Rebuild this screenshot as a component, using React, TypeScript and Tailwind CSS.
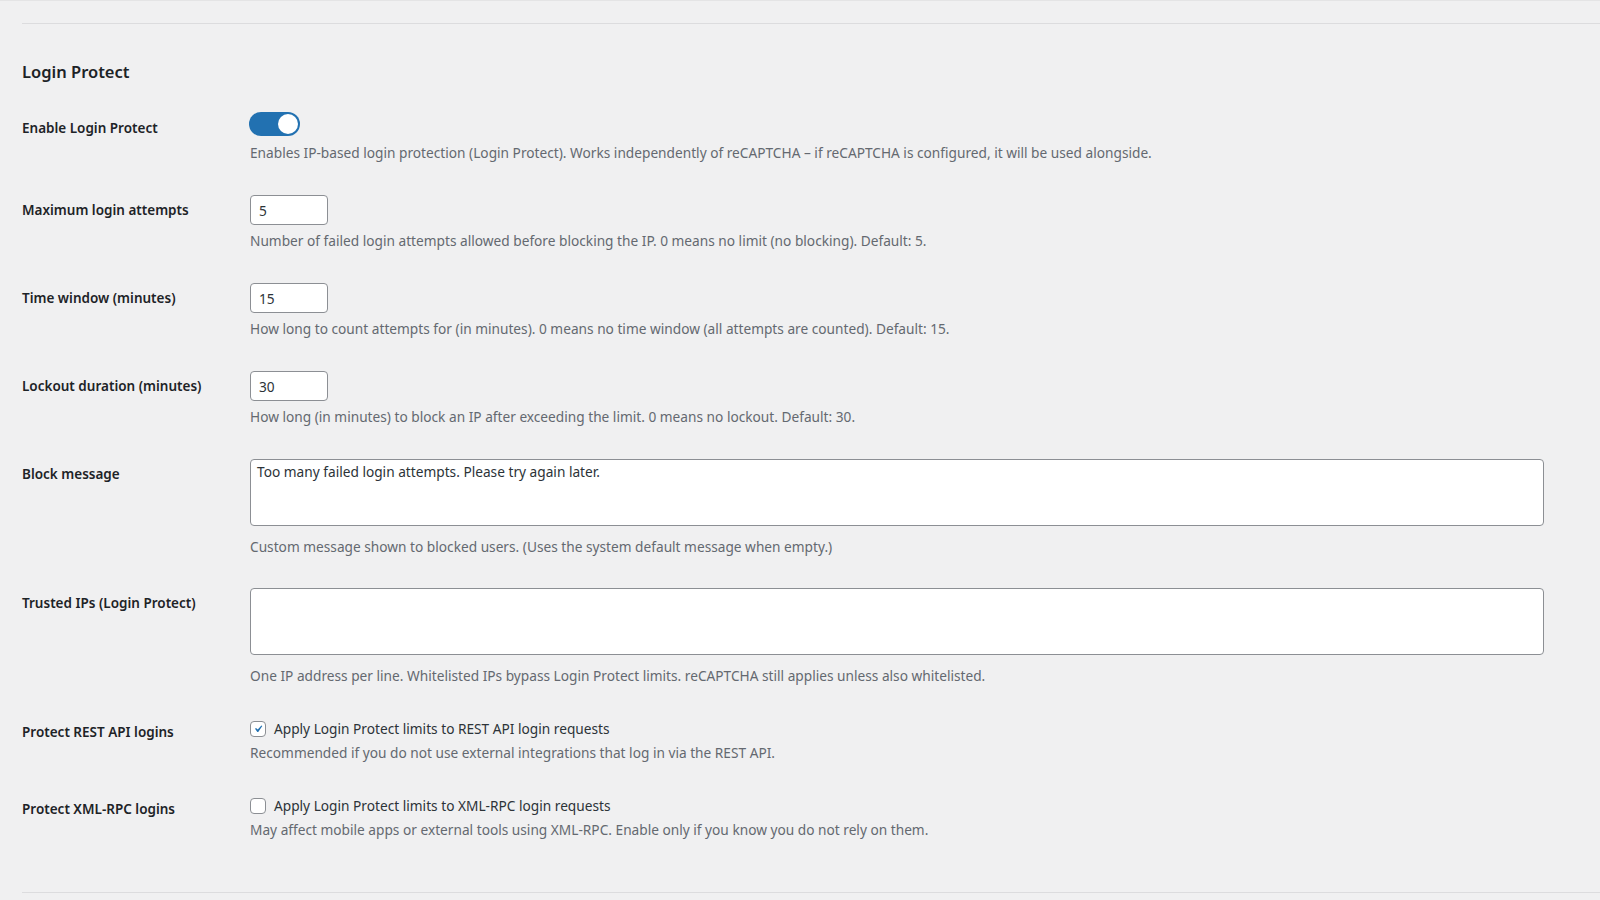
import { useState } from "react";

const FONT = { fontFamily: '"Noto Sans", "Open Sans", sans-serif' };

function Label({ children, pt }: { children: React.ReactNode; pt: string }) {
  return (
    <div className={`w-[228px] shrink-0 ${pt}`}>
      <span className="block text-[13.5px] leading-[18px] font-semibold text-[#1d2327]">
        {children}
      </span>
    </div>
  );
}

function Desc({ children, mt }: { children: React.ReactNode; mt: string }) {
  return (
    <p className={`${mt} text-[13.7px] leading-[20px] text-[#646970]`}>{children}</p>
  );
}

function NumberInput({ value }: { value: string }) {
  return (
    <input
      type="text"
      defaultValue={value}
      className="block h-[30px] w-[78px] rounded-[4px] border border-[#8c8f94] bg-white px-[8px] text-[13.7px] text-[#2c3338] outline-none"
    />
  );
}

function Check({ checked, label }: { checked: boolean; label: string }) {
  return (
    <label className="flex h-[20px] items-center gap-[8px] text-[13.7px] text-[#2c3338]">
      <span className="flex h-[16px] w-[16px] items-center justify-center rounded-[4px] border border-[#8c8f94] bg-white">
        {checked && (
          <svg viewBox="0 0 20 20" className="h-[22px] w-[22px] text-[#2271b1]">
            <path
              fill="currentColor"
              d="M14.83 4.89l1.34.94-5.81 8.38H9.02L5.78 9.67l1.34-1.25 2.57 2.4z"
            />
          </svg>
        )}
      </span>
      {label}
    </label>
  );
}

export default function App() {
  const [enabled, setEnabled] = useState(true);

  return (
    <div className="min-h-screen border-t border-[#e4e4e5] bg-[#f0f0f1]" style={FONT}>
      <div className="pl-[22px]">
        <div className="mt-[22px] border-t border-[#dcdcde]" />

        <h2 className="mt-[36px] text-[16.5px] leading-[24px] font-semibold text-[#1d2327]">
          Login Protect
        </h2>

        <div className="pr-[56px]">
          {/* enable */}
          <div className="mt-[28px] flex">
            <Label pt="pt-[7px]">Enable Login Protect</Label>
            <div className="flex-1">
              <button
                onClick={() => setEnabled(!enabled)}
                className={`relative -ml-[1px] block h-[24px] w-[51px] rounded-full ${
                  enabled ? "bg-[#2271b1]" : "bg-[#8c8f94]"
                }`}
              >
                <span
                  className={`absolute top-[2px] h-[20px] w-[20px] rounded-full bg-white ${
                    enabled ? "right-[2px]" : "left-[2px]"
                  }`}
                />
              </button>
              <Desc mt="mt-[7px]">
                Enables IP-based login protection (Login Protect). Works independently of
                reCAPTCHA – if reCAPTCHA is configured, it will be used alongside.
              </Desc>
            </div>
          </div>

          <div className="mt-[32px] flex">
            <Label pt="pt-[6px]">Maximum login attempts</Label>
            <div className="flex-1">
              <NumberInput value="5" />
              <Desc mt="mt-[6px]">
                Number of failed login attempts allowed before blocking the IP. 0 means no
                limit (no blocking). Default: 5.
              </Desc>
            </div>
          </div>

          <div className="mt-[32px] flex">
            <Label pt="pt-[6px]">Time window (minutes)</Label>
            <div className="flex-1">
              <NumberInput value="15" />
              <Desc mt="mt-[6px]">
                How long to count attempts for (in minutes). 0 means no time window (all
                attempts are counted). Default: 15.
              </Desc>
            </div>
          </div>

          <div className="mt-[32px] flex">
            <Label pt="pt-[6px]">Lockout duration (minutes)</Label>
            <div className="flex-1">
              <NumberInput value="30" />
              <Desc mt="mt-[6px]">
                How long (in minutes) to block an IP after exceeding the limit. 0 means no
                lockout. Default: 30.
              </Desc>
            </div>
          </div>

          <div className="mt-[32px] flex">
            <Label pt="pt-[6px]">Block message</Label>
            <div className="flex-1">
              <textarea
                defaultValue="Too many failed login attempts. Please try again later."
                className="block h-[67px] w-full resize-none rounded-[4px] border border-[#8c8f94] bg-white px-[6px] py-[2px] text-[13.7px] leading-[20px] text-[#2c3338] outline-none"
              />
              <Desc mt="mt-[11px]">
                Custom message shown to blocked users. (Uses the system default message when
                empty.)
              </Desc>
            </div>
          </div>

          <div className="mt-[31px] flex">
            <Label pt="pt-[6px]">Trusted IPs (Login Protect)</Label>
            <div className="flex-1">
              <textarea
                defaultValue=""
                className="block h-[67px] w-full resize-none rounded-[4px] border border-[#8c8f94] bg-white px-[6px] py-[2px] text-[13.7px] leading-[20px] text-[#2c3338] outline-none"
              />
              <Desc mt="mt-[11px]">
                One IP address per line. Whitelisted IPs bypass Login Protect limits.
                reCAPTCHA still applies unless also whitelisted.
              </Desc>
            </div>
          </div>

          <div className="mt-[33px] flex">
            <Label pt="pt-[4px]">Protect REST API logins</Label>
            <div className="flex-1">
              <Check checked label="Apply Login Protect limits to REST API login requests" />
              <Desc mt="mt-[4px]">
                Recommended if you do not use external integrations that log in via the REST
                API.
              </Desc>
            </div>
          </div>

          <div className="mt-[33px] flex">
            <Label pt="pt-[4px]">Protect XML-RPC logins</Label>
            <div className="flex-1">
              <Check checked={false} label="Apply Login Protect limits to XML-RPC login requests" />
              <Desc mt="mt-[4px]">
                May affect mobile apps or external tools using XML-RPC. Enable only if you
                know you do not rely on them.
              </Desc>
            </div>
          </div>
        </div>

        <div className="mt-[52px] border-t border-[#dcdcde]" />
      </div>
    </div>
  );
}
